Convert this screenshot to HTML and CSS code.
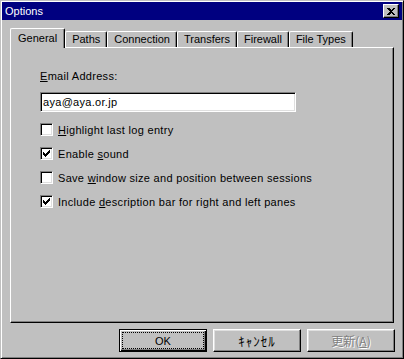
FILE: index.html
```html
<!DOCTYPE html>
<html lang="ja">
<head>
  <meta charset="UTF-8" />
  <title>Options</title>
  <link rel="stylesheet" href="styles.css">
</head>
<body>
  <div class="window">
    <div class="titlebar">
      <span class="title">Options</span>
      <button class="close-btn">
        <svg width="8" height="7" viewBox="0 0 8 7" shape-rendering="crispEdges">
          <path d="M0 0h2l2 2 2-2h2L5 3.5 8 7H6L4 5 2 7H0l3-3.5z" fill="#000"/>
        </svg>
      </button>
    </div>

    <div class="content">
      <div class="tabs">
        <div class="tab selected">General</div>
        <div class="tab">Paths</div>
        <div class="tab">Connection</div>
        <div class="tab">Transfers</div>
        <div class="tab">Firewall</div>
        <div class="tab">File Types</div>
      </div>

      <div class="panel">
        <div class="field-label"><u>E</u>mail Address:</div>
        <div class="textbox">aya@aya.or.jp</div>

        <div class="options">
          <div class="option">
            <span class="checkbox"></span>
            <span><u>H</u>ighlight last log entry</span>
          </div>
          <div class="option">
            <span class="checkbox checked">
              <svg width="7" height="7" viewBox="0 0 7 7" shape-rendering="crispEdges"><path d="M0 2h1v1h1v1h1V3h1V2h1V1h1V0h1v3H6v1H5v1H4v1H3v1H2V6H1V5H0z" fill="#000"/></svg>
            </span>
            <span>Enable <u>s</u>ound</span>
          </div>
          <div class="option">
            <span class="checkbox"></span>
            <span>Save <u>w</u>indow size and position between sessions</span>
          </div>
          <div class="option">
            <span class="checkbox checked">
              <svg width="7" height="7" viewBox="0 0 7 7" shape-rendering="crispEdges"><path d="M0 2h1v1h1v1h1V3h1V2h1V1h1V0h1v3H6v1H5v1H4v1H3v1H2V6H1V5H0z" fill="#000"/></svg>
            </span>
            <span>Include <u>d</u>escription bar for right and left panes</span>
          </div>
        </div>
      </div>

      <div class="buttons">
        <button class="btn default">OK</button>
        <button class="btn ja">ｷｬﾝｾﾙ</button>
        <button class="btn ja disabled">更新(<u>A</u>)</button>
      </div>
    </div>
  </div>
</body>
</html>
```

FILE: styles.css
```css
body {
  margin: 0;
  font-family: "Liberation Sans", Arial, sans-serif;
  font-size: 11px;
  color: #000;
}
.window {
  width: 404px;
  height: 359px;
  box-sizing: border-box;
  background-color: #c0c0c0;
  border: 1px solid;
  border-color: #c0c0c0 #000 #000 #c0c0c0;
  padding: 1px;
  box-shadow: inset 1px 1px #fff, inset -1px -1px #808080;
  display: flex;
  flex-direction: column;
}
.titlebar {
  height: 18px;
  background-color: #000080;
  color: #fff;
  display: flex;
  align-items: center;
  justify-content: space-between;
  padding: 0 3px;
}
.title {
  font-size: 11px;
}
.close-btn {
  width: 16px;
  height: 14px;
  box-sizing: border-box;
  padding: 0;
  background-color: #c0c0c0;
  border: 1px solid;
  border-color: #fff #000 #000 #fff;
  box-shadow: inset -1px -1px #808080;
  display: flex;
  align-items: center;
  justify-content: center;
}
.content {
  flex: 1;
  padding: 8px 8px 0;
  display: flex;
  flex-direction: column;
}
.tabs {
  display: flex;
  align-items: flex-end;
}
.tab {
  height: 16px;
  line-height: 15px;
  box-sizing: border-box;
  padding: 0 6px;
  border: 1px solid #fff;
  border-bottom: none;
  border-right-color: #000;
  border-radius: 2px 2px 0 0;
  box-shadow: inset -1px 0 #808080;
}
.tab.selected {
  height: 20px;
  line-height: 18px;
  padding: 0 7px;
  margin-bottom: -1px;
  background-color: #c0c0c0;
  z-index: 1;
}
.panel {
  height: 276px;
  box-sizing: border-box;
  border: 1px solid;
  border-color: #fff #000 #000 #fff;
  box-shadow: inset -1px -1px #808080;
  padding: 22px 0 0 29px;
  letter-spacing: 0.3px;
}
.field-label {
  line-height: 13px;
}
.textbox {
  margin-top: 9px;
  width: 256px;
  height: 20px;
  box-sizing: border-box;
  border: 1px solid;
  border-color: #808080 #fff #fff #808080;
  box-shadow: inset 1px 1px #000, inset -1px -1px #dfdfdf;
  background-color: #fff;
  padding: 0 2px;
  line-height: 18px;
}
.options {
  margin-top: 11px;
  display: flex;
  flex-direction: column;
  gap: 11px;
}
.option {
  display: flex;
  align-items: center;
  gap: 5px;
  height: 13px;
}
.checkbox {
  width: 13px;
  height: 13px;
  box-sizing: border-box;
  border: 1px solid;
  border-color: #808080 #fff #fff #808080;
  box-shadow: inset 1px 1px #000, inset -1px -1px #dfdfdf;
  background-color: #fff;
  display: flex;
  align-items: center;
  justify-content: center;
}
.buttons {
  margin-top: 6px;
  margin-right: -1px;
  display: flex;
  justify-content: flex-end;
  gap: 6px;
}
.btn {
  width: 88px;
  height: 23px;
  box-sizing: border-box;
  padding: 0;
  font-family: "Liberation Sans", Arial, sans-serif;
  font-size: 11px;
  color: #000;
  background-color: #c0c0c0;
  border: 1px solid;
  border-color: #fff #000 #000 #fff;
  box-shadow: inset -1px -1px #808080, inset 1px 1px #dfdfdf;
}
.btn.default {
  border-color: #000;
  box-shadow: inset 1px 1px #fff, inset -1px -1px #000, inset -2px -2px #808080;
  outline: 1px dotted #000;
  outline-offset: -4px;
}
.btn.ja {
  font-family: "Noto Sans CJK JP", sans-serif;
  font-size: 13px;
  letter-spacing: 1px;
}
.btn.disabled {
  font-size: 12px;
  color: #808080;
  text-shadow: 1px 1px #fff;
  letter-spacing: 0;
}
```
